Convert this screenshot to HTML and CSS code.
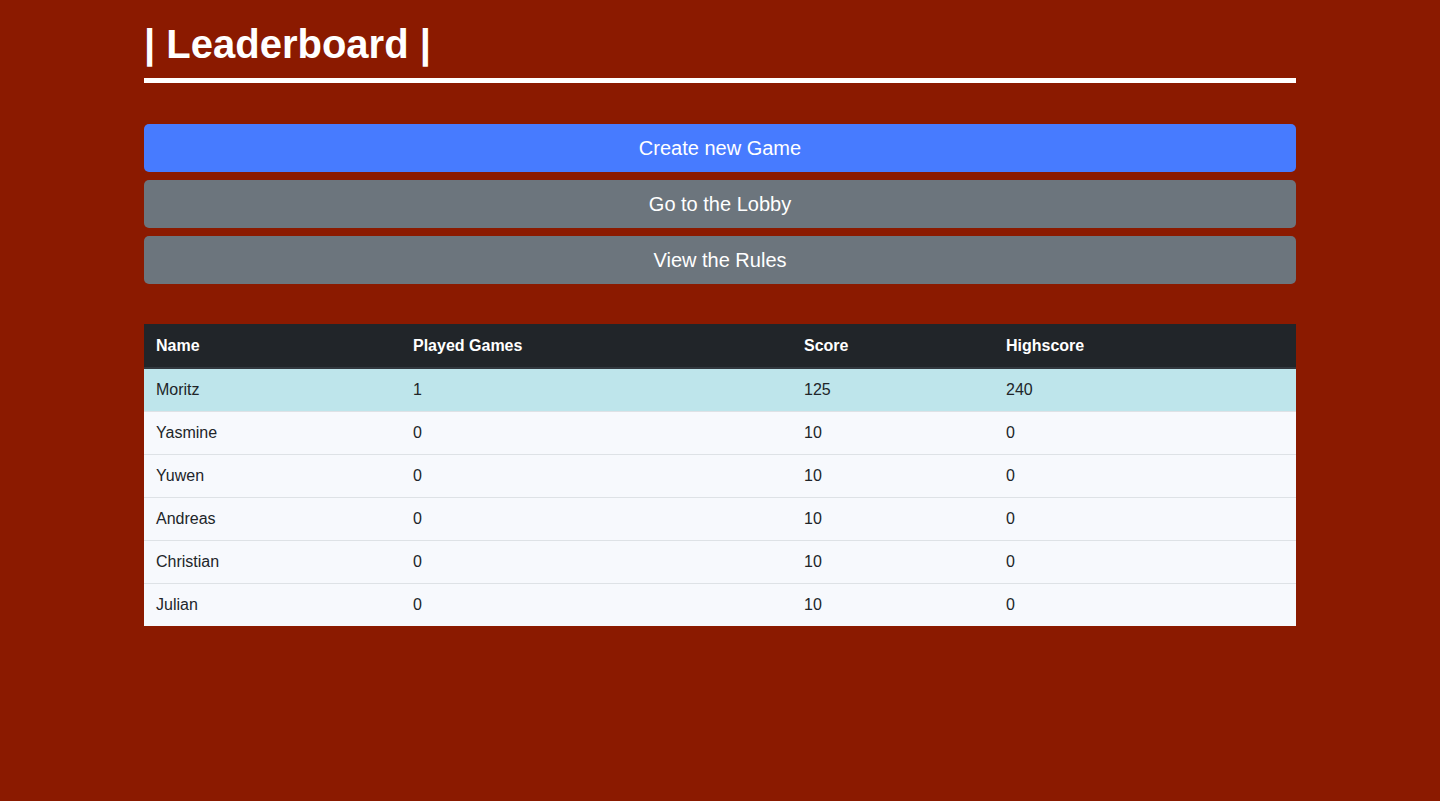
FILE: index.html
```html
<!DOCTYPE html>
<html lang="en">
<head>
<meta charset="utf-8">
<title>Leaderboard</title>
<link rel="stylesheet" href="styles.css">
</head>
<body>
<main class="container">
  <h1 class="title">| Leaderboard |</h1>
  <div class="rule"></div>
  <div class="actions">
    <button class="btn btn-primary">Create new Game</button>
    <button class="btn btn-secondary">Go to the Lobby</button>
    <button class="btn btn-secondary">View the Rules</button>
  </div>
  <table class="board">
    <colgroup>
      <col class="c-name"><col class="c-played"><col class="c-score"><col class="c-high">
    </colgroup>
    <thead>
      <tr><th>Name</th><th>Played Games</th><th>Score</th><th>Highscore</th></tr>
    </thead>
    <tbody>
      <tr class="me"><td>Moritz</td><td>1</td><td>125</td><td>240</td></tr>
      <tr><td>Yasmine</td><td>0</td><td>10</td><td>0</td></tr>
      <tr><td>Yuwen</td><td>0</td><td>10</td><td>0</td></tr>
      <tr><td>Andreas</td><td>0</td><td>10</td><td>0</td></tr>
      <tr><td>Christian</td><td>0</td><td>10</td><td>0</td></tr>
      <tr><td>Julian</td><td>0</td><td>10</td><td>0</td></tr>
    </tbody>
  </table>
</main>
</body>
</html>
```

FILE: styles.css
```css
html, body {
  margin: 0;
  padding: 0;
}
body {
  background: #8b1a00;
  font-family: "Liberation Sans", Arial, sans-serif;
  color: #212529;
  font-size: 16px;
}
.container {
  width: 1152px;
  margin: 0 auto;
  padding-top: 20px;
}
.title {
  margin: 0;
  font-size: 40px;
  line-height: 48px;
  font-weight: 700;
  color: #ffffff;
}
.rule {
  margin-top: 10px;
  height: 5px;
  background: #ffffff;
}
.actions {
  margin-top: 41px;
  display: flex;
  flex-direction: column;
  gap: 8px;
}
.btn {
  display: block;
  width: 100%;
  height: 48px;
  border: 0;
  border-radius: 5px;
  font-family: "Liberation Sans", Arial, sans-serif;
  font-size: 20px;
  line-height: 30px;
  color: #ffffff;
  padding: 9px 16px;
  cursor: pointer;
}
.btn-primary {
  background: #477bff;
}
.btn-secondary {
  background: #6c757d;
}
.board {
  margin-top: 40px;
  width: 100%;
  border-collapse: collapse;
  table-layout: fixed;
}
.c-name { width: 257px; }
.c-played { width: 391px; }
.c-score { width: 202px; }
.c-high { width: 302px; }
.board th,
.board td {
  text-align: left;
  padding: 9px 12px;
  line-height: 24px;
  font-size: 16px;
}
.board th {
  padding-top: 10px;
  background: #212529;
  color: #ffffff;
  font-weight: 700;
  border-bottom: 2px solid #32383e;
}
.board td {
  background: #f7f9fd;
  border-top: 1px solid #dee2e6;
}
.board tbody tr:first-child td {
  border-top: 0;
}
.board tr.me td {
  background: #bee5eb;
}
```
